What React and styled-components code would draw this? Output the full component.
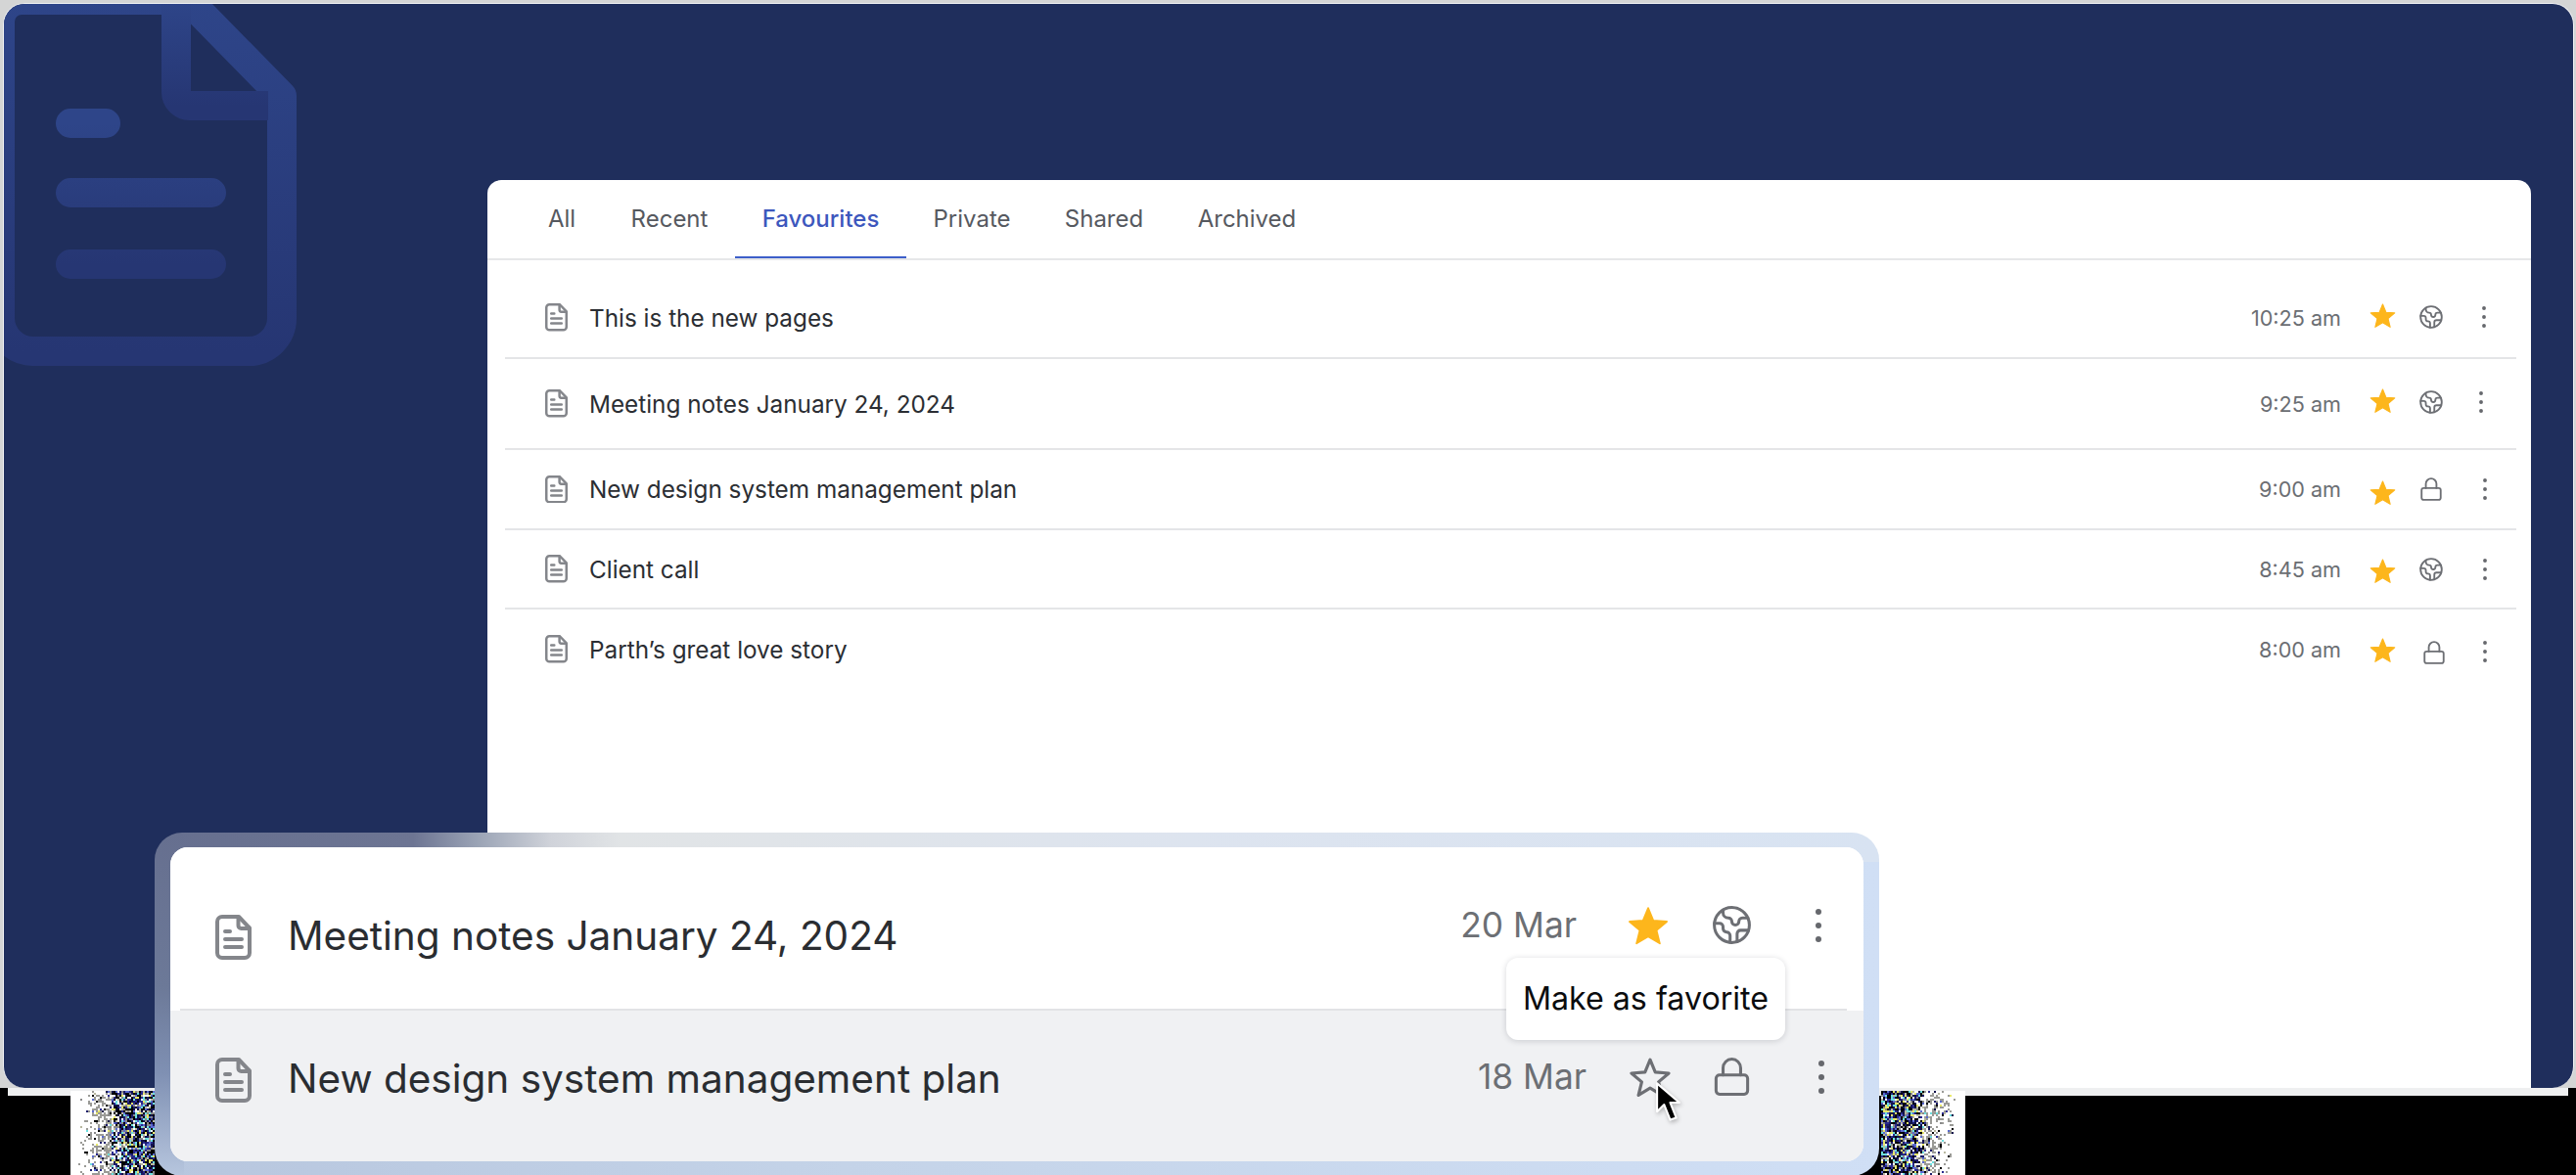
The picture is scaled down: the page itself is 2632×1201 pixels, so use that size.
import React, { useMemo } from 'react'
import styled, { createGlobalStyle } from 'styled-components'
import { Earth, Lock } from 'lucide-react'

const GlobalStyle = createGlobalStyle`
  html, body {
    margin: 0;
    padding: 0;
    background: #000;
    font-family: Inter, "Noto Sans", sans-serif;
  }
`

const Page = styled.div`
  position: relative;
  width: 2632px;
  height: 1201px;
  overflow: hidden;
  background: #000;
`
const Shell = styled.div`
  height: 1112px;
  padding: 3px 2px 0 3px;
  box-sizing: border-box;
  background: #d4d5d5;
  display: flex;
`
const Stage = styled.div`
  position: relative;
  flex: 1;
  overflow: hidden;
  box-sizing: border-box;
  border: 1px solid #f1f2f4;
  border-bottom: 0;
  border-radius: 22px;
  background: #1f2e5c;
  padding: 180px 43px 0 494px;
  display: flex;
`
const Strip = styled.div`
  height: 8px;
  margin: 0 8px;
  background: #eeeff0;
`
const Watermark = styled.svg`
  position: absolute;
  left: -4px;
  top: -4px;
`
const Panel = styled.div`
  position: relative;
  flex: 1;
  background: #fff;
  border-radius: 14px 14px 0 0;
  display: flex;
  flex-direction: column;
`
const Tabs = styled.div`
  height: 82px;
  box-sizing: border-box;
  border-bottom: 2px solid #e6e7e9;
  padding-left: 33px;
  display: flex;
`
const Tab = styled.div`
  width: ${(p) => p.$w}px;
  height: 80px;
  box-sizing: border-box;
  display: flex;
  align-items: center;
  justify-content: center;
  font-size: 24px;
  color: ${(p) => (p.$active ? '#3d57bd' : '#56595f')};
  font-weight: ${(p) => (p.$active ? 500 : 400)};
  border-bottom: ${(p) => (p.$active ? '2px solid #3d5fc9' : '2px solid transparent')};
`
const List = styled.div`
  padding: 18px 15px 0 18px;
`
const Row = styled.div`
  height: ${(p) => p.$h}px;
  box-sizing: border-box;
  display: flex;
  align-items: center;
  padding: 0 13px 0 41px;
  border-bottom: ${(p) => (p.$last ? 'none' : '2px solid #e4e5e7')};
`
const RowTitle = styled.span`
  flex: 1;
  margin-left: 22px;
  font-size: 24.3px;
  color: #2b2e33;
`
const Time = styled.span`
  font-size: 21.6px;
  color: #6b6e73;
  margin-right: 22px;
`
const Slot = styled.div`
  width: ${(p) => p.$w}px;
  display: flex;
  align-items: center;
  justify-content: center;
  flex-shrink: 0;
  margin-right: ${(p) => p.$gap || 0}px;
  & > svg {
    margin-left: ${(p) => (p.$x || 0) * 2}px;
    margin-top: ${(p) => (p.$y || 0) * 2}px;
  }
`
const FloatCard = styled.div`
  position: absolute;
  left: 158px;
  top: 851px;
  width: 1762px;
  height: 351px;
  box-sizing: border-box;
  padding: 15px 16px 15px 16px;
  border-radius: 28px;
  background:
    linear-gradient(180deg, #666f8f 0%, #6c7998 45%, #7f90b3 70%, #b7c6de 100%) left / 30px 100% no-repeat,
    linear-gradient(90deg, #666f8f 0%, #6d7593 15%, #9aa3b5 18.7%, #d0d3da 23%, #e1e4e6 27%, #dde4ef 60%, #d8e3f2 100%) top / 100% 30px no-repeat,
    linear-gradient(90deg, #b7c6de 0%, #c4d3e8 40%, #d0dff5 100%);
`
const CardInner = styled.div`
  height: 100%;
  border-radius: 18px;
  overflow: hidden;
  background: #fff;
  display: flex;
  flex-direction: column;
`
const BigRow = styled.div`
  height: ${(p) => p.$h}px;
  flex: ${(p) => (p.$grow ? 1 : 'none')};
  box-sizing: border-box;
  background: ${(p) => p.$bg};
  display: flex;
  align-items: center;
  padding: 0 18px 0 46px;
`
const BigTitleWrap = styled.div`
  flex: 1;
  display: flex;
  align-items: center;
  gap: 37px;
  margin-top: ${(p) => p.$mt}px;
`
const BigTitle = styled.span`
  font-size: 40.5px;
  color: #2a2d31;
  margin-top: -2px;
`
const Cluster = styled.div`
  display: flex;
  align-items: center;
  margin-top: ${(p) => p.$mt}px;
`
const BigTime = styled.span`
  font-size: 35.3px;
  color: #6c6f74;
  margin-right: ${(p) => p.$gap}px;
`
const RowDivider = styled.div`
  height: 2px;
  flex-shrink: 0;
  margin: 0 17px 0 10px;
  background: #e2e3e5;
`
const Tooltip = styled.div`
  position: absolute;
  left: 1381px;
  top: 128px;
  width: 285px;
  height: 84px;
  padding-bottom: 2px;
  box-sizing: border-box;
  display: flex;
  align-items: center;
  justify-content: center;
  border-radius: 12px;
  background: #fff;
  box-shadow: 0 1px 6px rgba(30, 35, 50, 0.18);
  font-size: 32.2px;
  color: #0b0c0e;
`
const CursorMark = styled.svg`
  position: absolute;
  left: 1532px;
  top: 253px;
  filter: drop-shadow(1px 2px 2px rgba(0, 0, 0, 0.25));
`
const NoiseBox = styled.svg`
  position: absolute;
  top: 1115px;
  left: ${(p) => p.$left}px;
`

const DocIcon = ({ w }) => (
  <svg width={w} height={(w * 46) / 37} viewBox='0 0 37 46' fill='none' stroke='#84868b' strokeWidth='4' strokeLinecap='round' strokeLinejoin='round' style={{ flexShrink: 0 }}>
    <path d='M24 2H7a5 5 0 0 0-5 5v32a5 5 0 0 0 5 5h23a5 5 0 0 0 5-5V13.5z' />
    <path d='M23.5 2.5V11a3 3 0 0 0 3 3H34' />
    <path d='M10 17h5M10 25h17M10 33h17' />
  </svg>
)

const StarIcon = ({ size, filled }) => (
  <svg width={size} height={size} viewBox='0 0 24 24' fill={filled ? '#fdb61c' : 'none'} stroke={filled ? '#fdb61c' : '#6d6f74'} strokeWidth={filled ? 1 : 1.8} strokeLinejoin='round'>
    <path d='M12 1.8l3 7.3 7.9.6-6 5.1 1.9 7.7L12 18.4l-6.800 4.100 1.900-7.700-6-5.100 7.900-.6z' />
  </svg>
)

const DotsIcon = ({ w, h }) => (
  <svg width={w} height={h} viewBox='0 0 6 34' fill='#66686d'>
    <circle cx='3' cy='3' r='3' />
    <circle cx='3' cy='17' r='3' />
    <circle cx='3' cy='31' r='3' />
  </svg>
)

const BigDoc = () => (
  <Watermark width='320' height='390' viewBox='0 0 320 390' fill='none'>
    <defs>
      <linearGradient id='wm' x1='0' y1='0' x2='0' y2='1'>
        <stop offset='0' stopColor='#2e4589' />
        <stop offset='1' stopColor='#263673' />
      </linearGradient>
    </defs>
    <g stroke='url(#wm)' strokeWidth='30' strokeLinejoin='round'>
      <path d='M192 0H22A22 22 0 0 0 0 22v303a34 34 0 0 0 34 34h220a34 34 0 0 0 34-34V98z' />
      <path d='M180 0v94a14 14 0 0 0 14 14h80' />
      <path d='M72 126h36M72 197h144M72 270h144' strokeLinecap='round' />
    </g>
  </Watermark>
)

const Noise = ({ left, flip, seed }) => {
  const dots = useMemo(() => {
    let s = seed
    const rnd = () => {
      s = (s * 16807) % 2147483647
      return s / 2147483647
    }
    const colours = ['#000', '#000', '#000', '#11124a', '#1c1c6a', '#2a2a90', '#fff', '#e8e86a', '#8a8a8a', '#5a6ad0', '#6de0e0', '#b8b8a0']
    const out = []
    for (let y = 0; y < 86; y += 2) {
      for (let x = 8; x < 86; x += 2) {
        const t = (x - 8) / 78
        if (rnd() < t * 1.5 + 0.03) {
          const c = t < 0.42 && rnd() < 0.7 ? '#9a9a96' : colours[Math.floor(rnd() * colours.length)]
          out.push({ x: flip ? 84 - x : x, y, c })
        }
      }
    }
    return out
  }, [flip, seed])
  return (
    <NoiseBox $left={left} width='86' height='86' viewBox='0 0 86 86'>
      <rect width='86' height='86' fill='#fff' />
      {dots.map((d, i) => (
        <rect key={i} x={d.x} y={d.y} width='2' height='2' fill={d.c} />
      ))}
    </NoiseBox>
  )
}

const tabs = [
  { label: 'All', w: 86 },
  { label: 'Recent', w: 134 },
  { label: 'Favourites', w: 175, active: true },
  { label: 'Private', w: 134 },
  { label: 'Shared', w: 136 },
  { label: 'Archived', w: 156 },
]

const rows = [
  { title: 'This is the new pages', time: '10:25 am', h: 83, icon: 'globe', starY: -2, iconY: -1, dots: 0, dotsY: -1 },
  { title: 'Meeting notes January 24, 2024', time: '9:25 am', h: 93, icon: 'globe', starY: -3, iconY: -2, dots: -3, dotsY: -2 },
  { title: 'New design system management plan', time: '9:00 am', h: 82, icon: 'lock', starY: 3, iconY: 0, dots: 1, dotsY: 0 },
  { title: 'Client call', time: '8:45 am', h: 81, icon: 'globe', starY: 2, iconY: 0, dots: 1, dotsY: 0 },
  { title: 'Parth\u2019s great love story', time: '8:00 am', h: 81, icon: 'lock', starY: 1, iconY: 3, iconX: 3, dots: 1, dotsY: 2, last: true },
]

const App = () => {
  return (
    <Page>
      <GlobalStyle />
      <Shell>
        <Stage>
          <BigDoc />
          <Panel>
            <Tabs>
              {tabs.map((t) => (
                <Tab key={t.label} $w={t.w} $active={t.active}>
                  {t.label}
                </Tab>
              ))}
            </Tabs>
            <List>
              {rows.map((r) => (
                <Row key={r.title} $h={r.h} $last={r.last}>
                  <DocIcon w={23} />
                  <RowTitle>{r.title}</RowTitle>
                  <Time>{r.time}</Time>
                  <Slot $w={40} $gap={10} $y={r.starY}>
                    <StarIcon size={27} filled />
                  </Slot>
                  <Slot $w={40} $gap={14} $x={r.iconX} $y={r.iconY}>
                    {r.icon === 'globe' ? <Earth size={26} color='#6d6f74' strokeWidth={1.7} /> : <Lock size={26} color='#6d6f74' strokeWidth={1.7} />}
                  </Slot>
                  <Slot $w={40} $x={r.dots} $y={r.dotsY}>
                    <DotsIcon w={4} h={22} />
                  </Slot>
                </Row>
              ))}
            </List>
          </Panel>
        </Stage>
      </Shell>
      <Strip />
      <Noise left={72} seed={4711} />
      <Noise left={1922} flip seed={9133} />
      <FloatCard>
        <CardInner>
          <BigRow $h={165} $bg='#fff'>
            <BigTitleWrap $mt={18}>
              <DocIcon w={37} />
              <BigTitle>Meeting notes January 24, 2024</BigTitle>
            </BigTitleWrap>
            <Cluster $mt={-6}>
              <BigTime $gap={45}>20 Mar</BigTime>
              <Slot $w={56} $gap={29}>
                <StarIcon size={42} filled />
              </Slot>
              <Slot $w={56} $gap={33}>
                <Earth size={43} color='#6d6f74' strokeWidth={1.7} />
              </Slot>
              <Slot $w={56}>
                <DotsIcon w={6} h={34} />
              </Slot>
            </Cluster>
          </BigRow>
          <RowDivider />
          <BigRow $grow $bg='#f0f1f3'>
            <BigTitleWrap $mt={-13}>
              <DocIcon w={37} />
              <BigTitle>New design system management plan</BigTitle>
            </BigTitleWrap>
            <Cluster $mt={-19}>
              <BigTime $gap={35}>18 Mar</BigTime>
              <Slot $w={56} $gap={29} $x={2}>
                <StarIcon size={42} />
              </Slot>
              <Slot $w={56} $gap={33}>
                <Lock size={43} color='#6d6f74' strokeWidth={1.7} />
              </Slot>
              <Slot $w={56} $x={3}>
                <DotsIcon w={6} h={34} />
              </Slot>
            </Cluster>
          </BigRow>
        </CardInner>
        <Tooltip>Make as favorite</Tooltip>
        <CursorMark width='31' height='44' viewBox='-3 -3 30 42'>
          <path d='M0 0v28l7-7 6 15 6-2-6-15h9z' fill='#000' stroke='#fff' strokeWidth='2' strokeLinejoin='round' />
        </CursorMark>
      </FloatCard>
    </Page>
  )
}

export default App
